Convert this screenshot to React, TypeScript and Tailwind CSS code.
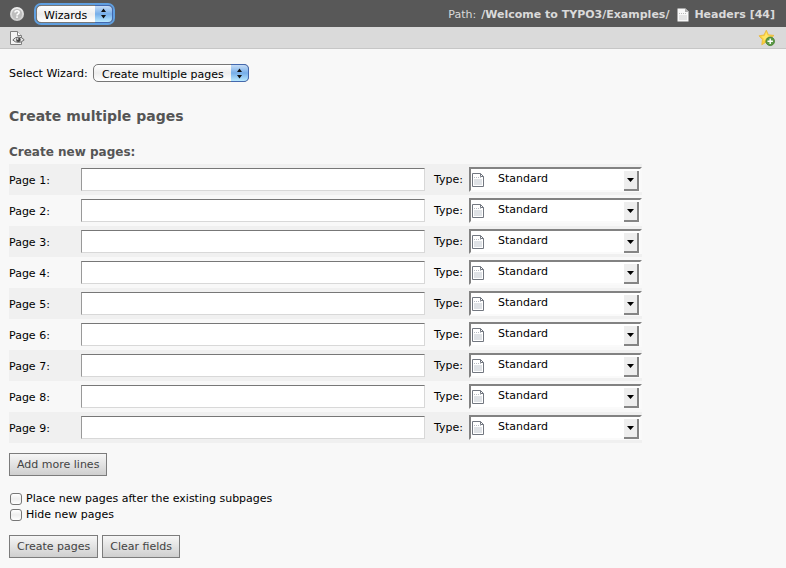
import { useState } from "react";

function HelpIcon() {
  return (
    <svg width="16" height="16" viewBox="0 0 16 16" aria-hidden="true">
      <defs>
        <linearGradient id="help" x1="0" y1="0" x2="0" y2="1">
          <stop offset="0" stopColor="#f0f0f0" />
          <stop offset="1" stopColor="#cacaca" />
        </linearGradient>
      </defs>
      <circle cx="8" cy="8" r="7" fill="url(#help)" />
      <circle cx="8" cy="8" r="5.2" fill="#bdbdbd" />
      <path d="M6 6.6C6 4.2 10.1 4.2 10.1 6.5 10.1 7.9 8 7.8 8 9.4" fill="none" stroke="#fff" strokeWidth="1.6" />
      <rect x="7.2" y="10.3" width="1.6" height="1.6" fill="#fff" />
    </svg>
  );
}

function ViewIcon() {
  return (
    <svg width="16" height="16" viewBox="0 0 16 16" aria-hidden="true">
      <path d="M1.5 1.5H8.5L12.5 5.5V14.5H1.5Z" fill="#f4f4f4" stroke="#808080" />
      <path d="M8.5 1.5V5.5H12.5" fill="#fff" stroke="#808080" />
      <path d="M3.8 10Q6 7 9.5 7 13 7 15.2 9.8 12.5 12.6 9.5 12.4 6 12.4 3.8 10Z" fill="#e4e4e4" stroke="#6a6a6a" />
      <circle cx="9.4" cy="9.7" r="2.3" fill="#444" />
      <circle cx="8.6" cy="8.9" r="0.9" fill="#ddd" />
    </svg>
  );
}

function StarIcon() {
  return (
    <svg width="18" height="18" viewBox="0 0 18 18" aria-hidden="true">
      <path d="M8.3 1.2L10.4 5.8 16 6.4 12.3 9.8 13.5 15 8.5 12.8 3.8 15.8 4.4 10.6 1 6.8 6 6Z" fill="#fbd03b" stroke="#e9b63a" strokeWidth="0.8" strokeLinejoin="round" />
      <path d="M8.3 3L9.6 6.6 13.5 7.2 9 10 5.5 12 5.8 9.8 3.3 7.6 6.6 7Z" fill="#ffe566" />
      <circle cx="12.2" cy="12.3" r="4.3" fill="#5b9a45" stroke="#3f7a2c" strokeWidth="0.8" />
      <path d="M12.2 9.6V15M9.5 12.3H14.9" stroke="#fff" strokeWidth="1.4" />
    </svg>
  );
}

function HeaderPageIcon() {
  return (
    <svg width="12" height="14" viewBox="0 0 12 14" aria-hidden="true">
      <path d="M0.5 0.5H8.5L11.5 3.5V13.5H0.5Z" fill="#f8f8f8" />
      <path d="M8 0.5V4H11.5Z" fill="#aaa" />
      <path d="M2 5.5H10" stroke="#bbb" strokeDasharray="1 1" />
      <rect x="2" y="7" width="8" height="5" fill="#e4e4e4" />
    </svg>
  );
}

function PageIcon() {
  return (
    <svg width="12" height="14" viewBox="0 0 12 14" aria-hidden="true">
      <path d="M0.5 0.5H8.5L11.5 3.5V13.5H0.5Z" fill="#fff" stroke="#727780" />
      <path d="M8.5 0.5V3.5H11.5" fill="none" stroke="#727780" />
      <path d="M2 4.5H10" stroke="#b8bcc4" strokeDasharray="1 1" />
      <rect x="2" y="6" width="8" height="6" fill="#dfe2e6" />
    </svg>
  );
}

function AquaArrows() {
  return (
    <span className="pointer-events-none absolute inset-y-0 right-0 flex w-[18px] items-center justify-center rounded-r-[5px] border border-l-0 border-[#4468ad] bg-linear-to-b from-[#c5dcf6] via-[#76aee9] to-[#b9e9ff]">
      <svg width="7" height="11" viewBox="0 0 7 11" aria-hidden="true">
        <path d="M3.5 0.5L6 4H1ZM3.5 10.5L6 7H1Z" fill="#111" />
      </svg>
    </span>
  );
}

const aquaSelect =
  "block h-[18px] w-full appearance-none rounded-[5px] border border-[#777] bg-linear-to-b from-white via-[#ededed] to-white pt-[2px] pr-5 text-black outline-none";
const button =
  "h-[23px] border border-[#7c7c7c] bg-linear-to-b from-[#f6f6f6] to-[#cfcfcf] px-[7px] text-[#434343]";
const checkbox =
  "h-3 w-3 appearance-none rounded-[3px] border border-[#777] bg-linear-to-b from-white via-[#eee] to-white checked:bg-[#4c86cf]";

function PageRow({ number }: { number: number }) {
  return (
    <div className="flex h-[31px] items-center odd:bg-[#f0f0f0]">
      <label htmlFor={`page-${number}`} className="w-[72px] shrink-0 pt-[2px]">
        Page {number}:
      </label>
      <input
        id={`page-${number}`}
        type="text"
        className="h-[23px] min-w-0 flex-1 border border-[#d8d8d8] border-t-[#777] border-l-[#999] bg-white px-1 outline-none"
      />
      <label htmlFor={`type-${number}`} className="w-11 shrink-0 pl-[9px]">
        Type:
      </label>
      <div className="relative w-[173px] shrink-0">
        <select
          id={`type-${number}`}
          className="block h-[25px] w-full appearance-none border-2 border-[#fafafa] border-t-[#828282] border-l-[#828282] bg-white pr-5 pb-px pl-[27px] text-black outline-none"
        >
          <option>Standard</option>
          <option>Shortcut</option>
        </select>
        <span className="pointer-events-none absolute top-[6px] left-[3px]">
          <PageIcon />
        </span>
        <span className="pointer-events-none absolute top-1 right-[3px] flex h-5 w-[15px] items-center justify-center border-r-2 border-b-2 border-[#858585] bg-[#eee]">
          <svg width="7" height="4" viewBox="0 0 7 4" aria-hidden="true">
            <path d="M0 0H7L3.5 4Z" fill="#000" />
          </svg>
        </span>
      </div>
    </div>
  );
}

export default function App() {
  const [lines, setLines] = useState(9);
  return (
    <div className="min-h-screen bg-[#f8f8f8] font-['DejaVu_Sans',Verdana,sans-serif] text-[11px] leading-4 text-black">
      <header className="flex h-[27px] items-center bg-[#585858] pr-[11px] pl-[9px] text-[#dadada]">
        <button type="button" aria-label="Help">
          <HelpIcon />
        </button>
        <div className="relative ml-[11px] w-[77px] rounded-[5px] ring-2 ring-[#5f9fe0]">
          <select aria-label="Function" className={`${aquaSelect} pl-[7px]`}>
            <option>Wizards</option>
          </select>
          <AquaArrows />
        </div>
        <div className="ml-auto flex items-center pt-[2px]">
          <span>Path:</span>
          <b className="ml-[5px]">/Welcome to TYPO3/Examples/</b>
          <span className="mr-[5px] ml-2">
            <HeaderPageIcon />
          </span>
          <b>Headers [44]</b>
        </div>
      </header>
      <div className="flex h-[22px] items-center justify-between border-b border-[#c6c6c6] bg-[#dadada] pr-[10px] pl-[9px]">
        <button type="button" aria-label="View page">
          <ViewIcon />
        </button>
        <button type="button" aria-label="Create bookmark">
          <StarIcon />
        </button>
      </div>
      <main className="px-[9px] pt-[15px]">
        <div className="flex items-center">
          <label htmlFor="wizard" className="w-[84px] pt-[2px] whitespace-nowrap">
            Select Wizard:
          </label>
          <div className="relative w-[156px]">
            <select id="wizard" className={`${aquaSelect} pl-2`}>
              <option>Create multiple pages</option>
            </select>
            <AquaArrows />
          </div>
        </div>
        <h1 className="mt-6 text-sm leading-5 font-bold text-[#555]">Create multiple pages</h1>
        <form onSubmit={(event) => event.preventDefault()}>
          <h2 className="mt-4 mb-[2px] text-xs leading-5 font-bold text-[#555]">Create new pages:</h2>
          <div className="max-w-[633px]">
            {Array.from({ length: lines }, (_, i) => (
              <PageRow key={i} number={i + 1} />
            ))}
          </div>
          <button type="button" className={`${button} mt-[10px] block`} onClick={() => setLines(lines + 5)}>
            Add more lines
          </button>
          <div className="mt-[15px]">
            <label className="flex items-center gap-1 pl-px">
              <input type="checkbox" className={checkbox} />
              Place new pages after the existing subpages
            </label>
            <label className="flex items-center gap-1 pl-px">
              <input type="checkbox" className={checkbox} />
              Hide new pages
            </label>
          </div>
          <div className="mt-3 flex gap-1 pb-[10px]">
            <button type="submit" className={button}>
              Create pages
            </button>
            <button type="reset" className={button}>
              Clear fields
            </button>
          </div>
        </form>
      </main>
    </div>
  );
}
